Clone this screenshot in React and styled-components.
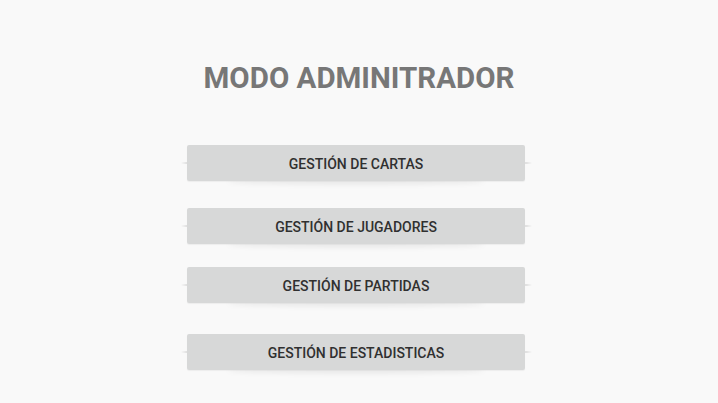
import styled, { createGlobalStyle } from "styled-components";

const GlobalStyle = createGlobalStyle`
  html {
    background: #f9f9f9;
  }
  body {
    margin: 0;
    padding: 0;
    font-family: Roboto, "Liberation Sans", sans-serif;
  }
`;

const Page = styled.div`
  display: flex;
  flex-direction: column;
  align-items: center;
  width: 718px;
  min-height: 403px;
  padding-top: 59px;
  box-sizing: border-box;
`;

const Title = styled.h1`
  margin: 0;
  font-size: 29.5px;
  line-height: 39px;
  font-weight: 700;
  color: #777777;
`;

const Menu = styled.div`
  display: flex;
  flex-direction: column;
  align-items: center;
  margin-top: 47px;
  margin-right: 6px;
`;

const MenuButton = styled.button`
  position: relative;
  width: 338px;
  height: 36px;
  margin-top: ${(p) => p.$gap}px;
  padding: 1px 0 0;
  border: none;
  border-radius: 2px;
  background: #d7d8d8;
  color: #303030;
  font-family: Roboto, "Liberation Sans", sans-serif;
  font-size: 14px;
  font-weight: 500;
  cursor: pointer;
  box-shadow: 0 1px 1px rgba(0, 0, 0, 0.05);

  &::before {
    content: "";
    position: absolute;
    left: -6px;
    right: -7px;
    top: 17px;
    height: 2px;
    background: linear-gradient(
      90deg,
      rgba(0, 0, 0, 0) 0%,
      rgba(0, 0, 0, 0.09) 1.5%,
      rgba(0, 0, 0, 0.09) 98.5%,
      rgba(0, 0, 0, 0) 100%
    );
    filter: blur(0.5px);
    z-index: -1;
  }

  &::after {
    content: "";
    position: absolute;
    left: 40px;
    right: 40px;
    bottom: -4px;
    height: 6px;
    border-radius: 50%;
    background: rgba(0, 0, 0, 0.06);
    filter: blur(2px);
    z-index: -1;
  }
`;

const items = [
  { label: "GESTIÓN DE CARTAS", gap: 0 },
  { label: "GESTIÓN DE JUGADORES", gap: 27 },
  { label: "GESTIÓN DE PARTIDAS", gap: 23 },
  { label: "GESTIÓN DE ESTADISTICAS", gap: 31 },
];

export default function App() {
  return (
    <>
      <GlobalStyle />
      <Page>
        <Title>MODO ADMINITRADOR</Title>
        <Menu>
          {items.map((item) => (
            <MenuButton key={item.label} $gap={item.gap}>
              {item.label}
            </MenuButton>
          ))}
        </Menu>
      </Page>
    </>
  );
}
